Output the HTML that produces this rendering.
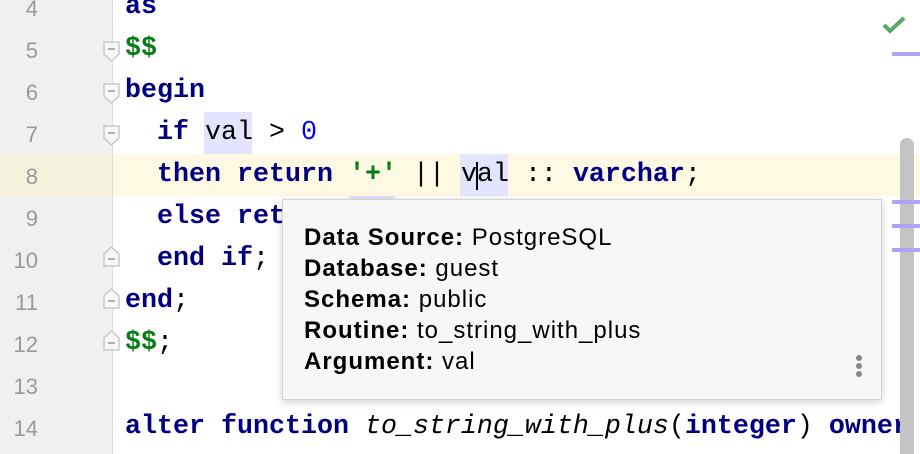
<!DOCTYPE html>
<html><head><style>
body{margin:0;width:920px;height:454px;overflow:hidden;background:#fff;position:relative;font-family:"Liberation Mono",monospace}
.g{position:absolute;left:0;top:0;width:112px;height:454px;background:#f0f0f0;border-right:1px solid #dcdcdc}
.l{position:absolute;left:0;width:920px;height:42px;line-height:42px;font-size:26.67px;white-space:pre}
.n{position:absolute;left:0;top:2px;width:38px;text-align:right;color:#999;font-family:"Liberation Sans",sans-serif;font-size:22px}
.c{position:absolute;left:125px}
.k{color:#000080;font-weight:bold}
.s{color:#067d17;font-weight:bold}
.b{color:#0000ff}
.f{position:absolute;left:103px}
.hl{position:absolute;background:#e4e4ff}
.tt{position:absolute;left:282px;top:199px;width:600px;height:201px;background:#f7f7f7;border:1px solid #d4d4d4;box-sizing:border-box;box-shadow:0 2px 8px rgba(0,0,0,.18);font-family:"Liberation Sans",sans-serif;font-size:24px;letter-spacing:1px;color:#000;padding:22px 0 0 21px;line-height:31px}
.tt b{font-weight:bold}
.m{position:absolute;left:892px;width:28px;height:4px;background:#b1a2f5}
</style></head><body>
<div class="g"></div>
<div style="position:absolute;left:113px;top:154px;width:807px;height:42px;background:#fdf9e2"></div>
<div style="position:absolute;left:0;top:154px;width:112px;height:42px;background:#f4f1dd"></div>
<div class="hl" style="left:204px;top:112px;width:48px;height:42px"></div>
<div class="hl" style="left:460px;top:154px;width:48px;height:42px"></div>
<div class="hl" style="left:349px;top:196px;width:46px;height:4px"></div>
<div class="l" style="top:-14px"><span class="n">4</span><span class="c"><span class="k">as</span></span></div>
<div class="l" style="top:28px"><span class="n">5</span><span class="c"><span class="s">$$</span></span></div>
<div class="l" style="top:70px"><span class="n">6</span><span class="c"><span class="k">begin</span></span></div>
<div class="l" style="top:112px"><span class="n">7</span><span class="c">  <span class="k">if</span> val &gt; <span class="b">0</span></span></div>
<div class="l" style="top:154px"><span class="n">8</span><span class="c">  <span class="k">then return</span> <span class="s">'+'</span> || val :: <span class="k">varchar</span>;</span></div>
<div class="l" style="top:196px"><span class="n">9</span><span class="c">  <span class="k">else return</span></span></div>
<div class="l" style="top:238px"><span class="n">10</span><span class="c">  <span class="k">end if</span>;</span></div>
<div class="l" style="top:280px"><span class="n">11</span><span class="c"><span class="k">end</span>;</span></div>
<div class="l" style="top:322px"><span class="n">12</span><span class="c"><span class="s">$$</span>;</span></div>
<div class="l" style="top:364px"><span class="n">13</span></div>
<div class="l" style="top:406px"><span class="n">14</span><span class="c"><span class="k">alter function</span> <i>to_string_with_plus</i>(<span class="k">integer</span>) <span class="k">owner</span></span></div>
<div style="position:absolute;left:476px;top:162px;width:2px;height:28px;background:#000"></div>
<svg class="f" style="top:41px" width="18" height="22"><path d="M1 1H16V13L8.5 20L1 13Z" fill="#f7f7f7" stroke="#c8c8c8" stroke-width="1.5"/><path d="M5 8H12" stroke="#999" stroke-width="1.5"/></svg>
<svg class="f" style="top:83px" width="18" height="22"><path d="M1 1H16V13L8.5 20L1 13Z" fill="#f7f7f7" stroke="#c8c8c8" stroke-width="1.5"/><path d="M5 8H12" stroke="#999" stroke-width="1.5"/></svg>
<svg class="f" style="top:125px" width="18" height="22"><path d="M1 1H16V13L8.5 20L1 13Z" fill="#f7f7f7" stroke="#c8c8c8" stroke-width="1.5"/><path d="M5 8H12" stroke="#999" stroke-width="1.5"/></svg>
<svg class="f" style="top:245px" width="18" height="22"><path d="M1 21H16V9L8.5 2L1 9Z" fill="#f7f7f7" stroke="#c8c8c8" stroke-width="1.5"/><path d="M5 14H12" stroke="#999" stroke-width="1.5"/></svg>
<svg class="f" style="top:287px" width="18" height="22"><path d="M1 21H16V9L8.5 2L1 9Z" fill="#f7f7f7" stroke="#c8c8c8" stroke-width="1.5"/><path d="M5 14H12" stroke="#999" stroke-width="1.5"/></svg>
<svg class="f" style="top:329px" width="18" height="22"><path d="M1 21H16V9L8.5 2L1 9Z" fill="#f7f7f7" stroke="#c8c8c8" stroke-width="1.5"/><path d="M5 14H12" stroke="#999" stroke-width="1.5"/></svg>
<div style="position:absolute;left:900px;top:138px;width:14px;height:316px;background:#c4c4c4;border-radius:7px 7px 0 0"></div>
<div class="m" style="top:52px"></div>
<div class="m" style="top:200px"></div>
<div class="m" style="top:224px"></div>
<div class="m" style="top:248px"></div>
<svg style="position:absolute;left:882px;top:15px" width="24" height="20" viewBox="0 0 24 20"><path d="M2 10 L8 16 L22 3" fill="none" stroke="#59a869" stroke-width="4"/></svg>
<div class="tt"><b>Data Source:</b> PostgreSQL<br><b>Database:</b> guest<br><b>Schema:</b> public<br><b>Routine:</b> to_string_with_plus<br><b>Argument:</b> val
<div style="position:absolute;left:573px;top:155px;width:6px;height:6px;border-radius:3px;background:#888;box-shadow:0 8px 0 #888,0 16px 0 #888"></div></div>
</body></html>
